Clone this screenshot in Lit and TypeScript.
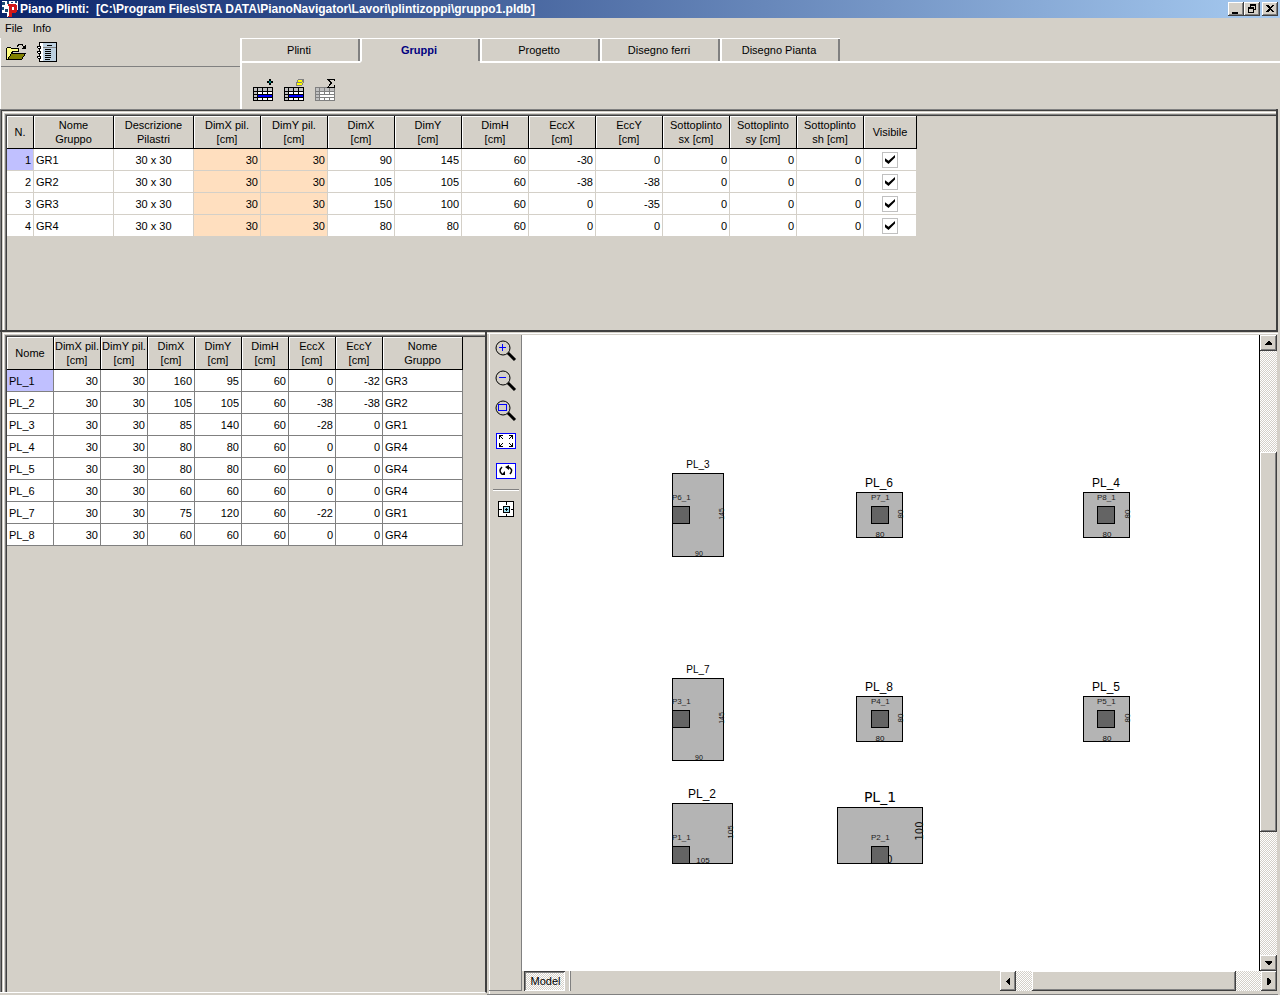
import { LitElement, html, svg, css } from "lit";
import { customElement, state } from "lit/decorators.js";

type Column = { lines: string[]; align: "left" | "center" | "right"; width: number; tint?: boolean };

const groupColumns: Column[] = [
  { lines: ["N."], align: "right", width: 27 },
  { lines: ["Nome", "Gruppo"], align: "left", width: 80 },
  { lines: ["Descrizione", "Pilastri"], align: "center", width: 80 },
  { lines: ["DimX pil.", "[cm]"], align: "right", width: 67, tint: true },
  { lines: ["DimY pil.", "[cm]"], align: "right", width: 67, tint: true },
  { lines: ["DimX", "[cm]"], align: "right", width: 67 },
  { lines: ["DimY", "[cm]"], align: "right", width: 67 },
  { lines: ["DimH", "[cm]"], align: "right", width: 67 },
  { lines: ["EccX", "[cm]"], align: "right", width: 67 },
  { lines: ["EccY", "[cm]"], align: "right", width: 67 },
  { lines: ["Sottoplinto", "sx [cm]"], align: "right", width: 67 },
  { lines: ["Sottoplinto", "sy [cm]"], align: "right", width: 67 },
  { lines: ["Sottoplinto", "sh [cm]"], align: "right", width: 67 },
  { lines: ["Visibile"], align: "center", width: 53 },
];

const groupRows: (string | boolean)[][] = [
  ["1", "GR1", "30 x 30", "30", "30", "90", "145", "60", "-30", "0", "0", "0", "0", true],
  ["2", "GR2", "30 x 30", "30", "30", "105", "105", "60", "-38", "-38", "0", "0", "0", true],
  ["3", "GR3", "30 x 30", "30", "30", "150", "100", "60", "0", "-35", "0", "0", "0", true],
  ["4", "GR4", "30 x 30", "30", "30", "80", "80", "60", "0", "0", "0", "0", "0", true],
];

const footingColumns: Column[] = [
  { lines: ["Nome"], align: "left", width: 47 },
  { lines: ["DimX pil.", "[cm]"], align: "right", width: 47 },
  { lines: ["DimY pil.", "[cm]"], align: "right", width: 47 },
  { lines: ["DimX", "[cm]"], align: "right", width: 47 },
  { lines: ["DimY", "[cm]"], align: "right", width: 47 },
  { lines: ["DimH", "[cm]"], align: "right", width: 47 },
  { lines: ["EccX", "[cm]"], align: "right", width: 47 },
  { lines: ["EccY", "[cm]"], align: "right", width: 47 },
  { lines: ["Nome", "Gruppo"], align: "left", width: 80 },
];

const footingRows: string[][] = [
  ["PL_1", "30", "30", "160", "95", "60", "0", "-32", "GR3"],
  ["PL_2", "30", "30", "105", "105", "60", "-38", "-38", "GR2"],
  ["PL_3", "30", "30", "85", "140", "60", "-28", "0", "GR1"],
  ["PL_4", "30", "30", "80", "80", "60", "0", "0", "GR4"],
  ["PL_5", "30", "30", "80", "80", "60", "0", "0", "GR4"],
  ["PL_6", "30", "30", "60", "60", "60", "0", "0", "GR4"],
  ["PL_7", "30", "30", "75", "120", "60", "-22", "0", "GR1"],
  ["PL_8", "30", "30", "60", "60", "60", "0", "0", "GR4"],
];

type Footing = {
  name: string; pillar: string; x: number; y: number; w: number; h: number;
  px: number; py: number; dimX: string; dimY: string; kind: string;
};

const footings: Footing[] = [
  { name: "PL_3", pillar: "P6_1", x: 150, y: 138, w: 51, h: 83, px: 150, py: 171, dimX: "90", dimY: "145", kind: "narrow" },
  { name: "PL_6", pillar: "P7_1", x: 334, y: 157, w: 46, h: 45, px: 349, py: 171, dimX: "80", dimY: "80", kind: "plain" },
  { name: "PL_4", pillar: "P8_1", x: 561, y: 157, w: 46, h: 45, px: 575, py: 171, dimX: "80", dimY: "80", kind: "plain" },
  { name: "PL_7", pillar: "P3_1", x: 150, y: 343, w: 51, h: 82, px: 150, py: 375, dimX: "90", dimY: "145", kind: "narrow" },
  { name: "PL_8", pillar: "P4_1", x: 334, y: 361, w: 46, h: 45, px: 349, py: 375, dimX: "80", dimY: "80", kind: "plain" },
  { name: "PL_5", pillar: "P5_1", x: 561, y: 361, w: 46, h: 45, px: 575, py: 375, dimX: "80", dimY: "80", kind: "plain" },
  { name: "PL_2", pillar: "P1_1", x: 150, y: 468, w: 60, h: 60, px: 150, py: 511, dimX: "105", dimY: "105", kind: "plain" },
  { name: "PL_1", pillar: "P2_1", x: 315, y: 472, w: 85, h: 56, px: 349, py: 511, dimX: "150", dimY: "100", kind: "wide" },
];

const gridIcon = (stroke: string, band: string) => svg`
  <rect x="0" y="8" width="20" height="14" fill="#fff"/>
  <path d="M0 8h20v4H0zM0 8h5v14H0z" fill="#c0c0c0"/>
  <rect x="5" y="16" width="15" height="2" fill=${band}/>
  <path d="M.5 8.500h19v13h-19zM0 12.500h20M0 15.500h20M0 18.500h20M4.500 8v14M9.500 8v14M14.500 8v14" fill="none" stroke=${stroke}/>
  <rect x="5" y="16" width="14" height="2" fill=${band}/>`;

const lens = svg`
  <circle cx="8" cy="8" r="7" fill="none" stroke="#000"/>
  <path d="M13 13l7 7" stroke="#000" stroke-width="3"/>`;

@customElement("app-root")
export class AppRoot extends LitElement {
  @state() private activeTab = "Gruppi";

  static styles = css`
    :host {
      display: flex;
      flex-direction: column;
      height: 100vh;
      min-height: 600px;
      overflow: hidden;
      box-sizing: border-box;
      background: #d4d0c8;
      color: #000;
      font: 11px/14px "Liberation Sans", Arial, sans-serif;
      cursor: default;
    }
    * { box-sizing: border-box; }
    button { font: inherit; color: inherit; margin: 0; padding: 0; border: 0; background: none; border-radius: 0; }
    svg { display: block; }
    .crisp { shape-rendering: crispEdges; }

    .titlebar {
      flex: none;
      display: flex;
      align-items: center;
      height: 18px;
      padding: 0 2px;
      gap: 2px;
      background: linear-gradient(90deg, #0a246a, #a6caf0);
    }
    .title { flex: 1; margin: 0; font-size: 12px; line-height: 18px; font-weight: bold; color: #fff; white-space: pre; overflow: hidden; }
    .winbuttons { display: flex; }
    .winbutton { display: grid; place-items: center; width: 16px; height: 14px; }
    .raised {
      background: #d4d0c8;
      box-shadow: inset -1px -1px #404040, inset 1px 1px #fff, inset -2px -2px #808080;
    }
    .close { margin-left: 2px; }

    .menu { flex: none; display: flex; height: 20px; }
    .menu button { padding: 0 5px; line-height: 20px; }

    .top { flex: none; display: flex; height: 71px; }
    .filebar { width: 240px; border-left: 1px solid #fff; }
    .filetools { display: flex; align-items: center; gap: 10px; height: 29px; padding-left: 5px; border-bottom: 1px solid #808080; }
    .tabpage { flex: 1; display: flex; flex-direction: column; }
    .tabs { display: flex; height: 25px; }
    .tab {
      width: 120px;
      padding-right: 4px;
      border-top: 1px solid #fff;
      border-left: 2px solid #fff;
      border-bottom: 2px solid #fff;
      box-shadow: inset -2px 0 #808080;
      text-align: center;
    }
    .tab[aria-selected="true"] { border-bottom-color: #d4d0c8; color: #000080; font-weight: bold; }
    .tabrest { flex: 1; border-bottom: 2px solid #fff; }
    .tabtools { flex: 1; display: flex; gap: 10px; padding: 15px 0 0 11px; border-left: 2px solid #fff; align-items: flex-start; }

    .frame {
      padding: 7px;
      box-shadow: inset 1px 1px #808080, inset 2px 2px #404040, inset 3px 3px #d4d0c8,
        inset 4px 4px #fff, inset 5px 5px #d4d0c8, inset 6px 6px #808080, inset 7px 7px #404040;
      overflow: hidden;
    }
    .groups { flex: none; height: 221px; border-right: 2px solid #404040; margin-right: 2px; }

    .bottom { flex: 1; display: flex; min-height: 0; border-top: 2px solid #404040; margin-right: 2px; }
    .footings {
      width: 487px;
      flex: none;
      margin-bottom: 2px;
      padding: 5px 2px 2px 7px;
      border-right: 2px solid #404040;
      border-bottom: 1px solid #fff;
      box-shadow: inset 1px 0 #808080, inset 2px 0 #404040, inset 3px 1px #d4d0c8,
        inset 4px 2px #fff, inset 5px 3px #d4d0c8, inset 6px 4px #808080, inset 7px 5px #404040;
      overflow: hidden;
    }

    table { border-collapse: separate; border-spacing: 0; table-layout: fixed; width: 0; --line: #d4d0c8; }
    .dark { --line: #808080; }
    th {
      height: 33px;
      padding: 0;
      font-weight: normal;
      white-space: nowrap;
      background: #d4d0c8;
      border-right: 1px solid #000;
      border-bottom: 1px solid #000;
      box-shadow: inset 1px 1px #fff;
      overflow: hidden;
    }
    td {
      height: 22px;
      padding: 0 2px;
      background: #fff;
      border-right: 1px solid var(--line);
      border-bottom: 1px solid var(--line);
      white-space: nowrap;
    }
    .right { text-align: right; }
    .center { text-align: center; }
    .left { text-align: left; }
    .tint { background: #ffdfbf; }
    .current { background: #c0c0ff; }
    .check {
      appearance: none;
      display: grid;
      place-items: center;
      width: 16px;
      height: 16px;
      margin: 0 auto;
      border: 1px solid #c0c0c0;
      background: #fff;
    }
    .check:checked::before {
      content: "";
      width: 10px;
      height: 9px;
      background: #000;
      clip-path: polygon(0 35%, 35% 65%, 100% 0, 100% 28%, 35% 100%, 0 70%);
    }

    .viewer { flex: 1; display: flex; min-width: 0; padding: 3px 1px 3px 2px; border-bottom: 1px solid #808080; box-shadow: inset 0 1px #d4d0c8, inset 0 2px #fff, inset 2px 0 #d4d0c8, inset 3px 0 #fff; }
    .viewtools {
      flex: none;
      display: flex;
      flex-direction: column;
      align-items: center;
      gap: 8px;
      width: 33px;
      padding: 5px 0 0 2px;
      border-right: 1px solid #808080;
      border-bottom: 1px solid #808080;
    }
    .viewtools button { display: grid; place-items: center; width: 22px; height: 22px; }
    .rule { width: 26px; height: 2px; border: 0; margin: -1px 0; border-top: 1px solid #808080; border-bottom: 1px solid #fff; }
    .stage { flex: 1; display: flex; flex-direction: column; min-width: 0; }
    .view { flex: 1; display: flex; min-height: 0; }
    .canvas { flex: 1; min-width: 0; height: 100%; background: #fff; }
    .vscroll { flex: none; display: flex; flex-direction: column; width: 18px; border-left: 1px solid #000; }
    .track { display: flex; flex: 1; background: repeating-conic-gradient(#fff 0 25%, #d4d0c8 0 50%) 0 0 / 2px 2px; }
    .vscroll .track { flex-direction: column; }
    .arrow { flex: none; display: grid; place-items: center; }
    .vscroll .arrow { height: 16px; }
    .before-v { flex: 101; } .thumb-v { flex: 380; } .after-v { flex: 123; }
    .before-h { flex: 16; } .thumb-h { flex: 204; } .after-h { flex: 25; }
    .sheets { flex: none; display: flex; height: 20px; }
    .sheet {
      width: 41px;
      margin: 0 4px 0 2px;
      padding-left: 2px;
      line-height: 20px;
      background: repeating-conic-gradient(#fff 0 25%, #d4d0c8 0 50%) 0 0 / 2px 2px;
      box-shadow: inset 1px 1px #404040, inset -1px -1px #fff, inset 2px 2px #808080;
    }
    .grip { width: 2px; border-left: 1px solid #fff; border-right: 1px solid #808080; }
    .sheetrest { flex: 429; }
    .hscroll { flex: 277; display: flex; }
    .hscroll .arrow { width: 16px; }

    .body { fill: #b4b4b4; stroke: #000; }
    .pillar { fill: #646464; stroke: #000; }
    .label { font-size: 12px; text-anchor: middle; }
    .narrow { font-family: "Liberation Sans Narrow", "Liberation Sans", sans-serif; font-size: 10px; }
    .wide { font-family: "DejaVu Sans", sans-serif; font-size: 14px; }
    .small { font-size: 8px; fill: #222; }
    .dim { font-size: 8px; text-anchor: middle; fill: #111; }
    .dim.narrow { font-size: 7px; }
    .dim.wide { font-size: 10px; }
  `;

  private header(columns: Column[]) {
    return html`
      <colgroup>${columns.map((c) => html`<col style="width:${c.width}px">`)}</colgroup>
      <thead><tr>${columns.map((c) => html`<th scope="col">${c.lines.map((l, i) => (i ? html`<br>${l}` : l))}</th>`)}</tr></thead>`;
  }

  private rows(columns: Column[], rows: (string | boolean)[][]) {
    return html`<tbody>${rows.map((row, r) => html`<tr>${row.map((v, c) => html`
      <td class="${columns[c].align} ${columns[c].tint ? "tint" : ""} ${r === 0 && c === 0 ? "current" : ""}">${
        typeof v === "boolean"
          ? html`<input class="check" type="checkbox" aria-label="Visibile ${row[1]}" ?checked=${v}>`
          : v}</td>`)}</tr>`)}</tbody>`;
  }

  private footing(f: Footing) {
    const cx = f.x + Math.round(f.w / 2);
    const sideX = f.x + f.w + 1;
    const sideY = f.kind === "wide" ? f.y + 24 : f.y + Math.round(f.h / 2) - 1;
    const bottomX = f.kind === "wide" ? cx + 3 : cx + 1;
    return svg`<g>
      <rect class="body crisp" x=${f.x + 0.5} y=${f.y + 0.5} width=${f.w} height=${f.h}/>
      <text class="dim ${f.kind}" x=${bottomX} y=${f.y + f.h}>${f.dimX}</text>
      <text class="dim ${f.kind}" transform="translate(${sideX} ${sideY}) rotate(-90)">${f.dimY}</text>
      <rect class="pillar crisp" x=${f.px + 0.5} y=${f.py + 0.5} width="17" height="17"/>
      <text class="small" x=${f.px} y=${f.py - 6}>${f.pillar}</text>
      <text class="label ${f.kind}" x=${cx} y=${f.y - 5}>${f.name}</text>
    </g>`;
  }

  render() {
    const tabs = ["Plinti", "Gruppi", "Progetto", "Disegno ferri", "Disegno Pianta"];
    return html`
      <header class="titlebar">
        <svg class="crisp" width="16" height="16" viewBox="0 0 16 16" aria-hidden="true">
          <path d="M0 0h16v9h-4v2h-2v5H5v-4H0z" fill="#fff"/>
          <path d="M0 1h3v3H0zM5 0h2v3H5zM9 1h2v1H9zM13 0h2v2h-2zM0 6h2v3H0zM3 8h3v3H3z" fill="#1d4c74"/>
          <path d="M6 3h7l2 2v5l-2 2h-3v4H6v-1h1V5H6zM10 6v3h2V6z" fill="#d01818" fill-rule="evenodd"/>
        </svg>
        <h1 class="title">Piano Plinti:  [C:\\Program Files\\STA DATA\\PianoNavigator\\Lavori\\plintizoppi\\gruppo1.pldb]</h1>
        <div class="winbuttons">
          <button class="winbutton raised" aria-label="Riduci a icona"><svg class="crisp" width="12" height="10"><path d="M2 8h6v2H2z"/></svg></button>
          <button class="winbutton raised" aria-label="Ripristina"><svg class="crisp" width="12" height="10"><path d="M4 0h6v6H8V5h1V2H5v1H4zM2 3h6v6H2zM3 5v3h4V5z" fill-rule="evenodd"/></svg></button>
          <button class="winbutton raised close" aria-label="Chiudi"><svg class="crisp" width="12" height="10"><path d="M2 1h2l2 2 2-2h2L7 4.500 10 8H8L6 6 4 8H2l3-3.500z"/></svg></button>
        </div>
      </header>
      <nav class="menu"><button>File</button><button>Info</button></nav>

      <div class="top">
        <div class="filebar">
          <div class="filetools">
            <button aria-label="Apri"><svg class="crisp" width="21" height="18" viewBox="0 0 21 18">
              <path d="M.5 16.500V5.500l1-1h3l1 1h7v3h-6l-4 8z" fill="#ffff80" stroke="#000"/>
              <path d="M1.500 16.500l4-6h14l-4 6z" fill="#808000" stroke="#000"/>
              <path d="M11 3.500l2-2h3l2 3" fill="none" stroke="#000"/><path d="M20 1v5h-5z"/>
            </svg></button>
            <button aria-label="Relazione"><svg class="crisp" width="20" height="20" viewBox="0 0 20 20">
              <path d="M2.500.5h17v19h-17z" fill="#bcd0e0" stroke="#000"/><path d="M3 1h3v18H3z" fill="#fff"/>
              <path d="M6 5.500h13" stroke="#808080"/><path d="M10 3.500h5M8 7.500h6M8 9.500h6M8 11.500h6M8 13.500h6M8 15.500h6M8 17.500h5" stroke="#000"/>
              <path d="M0 4h4v3H1v-1H0zM0 9h4v3H1v-1H0zM0 14h4v3H1v-1H0z"/><path d="M1 5h2v1H1zM1 10h2v1H1zM1 15h2v1H1z" fill="#fff"/>
            </svg></button>
          </div>
        </div>
        <div class="tabpage">
          <div class="tabs" role="tablist">
            ${tabs.map((t) => html`<button class="tab" role="tab" aria-selected=${t === this.activeTab ? "true" : "false"}
              @click=${() => (this.activeTab = t)}>${t}</button>`)}
            <div class="tabrest"></div>
          </div>
          <div class="tabtools">
            <button aria-label="Aggiungi gruppo"><svg class="crisp" width="21" height="24" viewBox="0 -1 21 24">${gridIcon("#000", "#0000ff")}
              <path d="M16 0h2v2h2v2h-2v2h-2V4h-2V2h2z"/><path d="M16 2h2v2h-2z" fill="#008080"/></svg></button>
            <button aria-label="Cancella gruppo"><svg class="crisp" width="21" height="24" viewBox="0 -1 21 24">${gridIcon("#000", "#0000ff")}
              <path d="M14.500.5h5v3l-2 3h-5v-3z" fill="#ffff00" stroke="#808080"/><path d="M12.500 3.500h5l2-3" fill="none" stroke="#808080"/></svg></button>
            <button aria-label="Somma"><svg class="crisp" width="21" height="24" viewBox="0 -1 21 24">${gridIcon("#808080", "#ffffff")}
              <path d="M12 7h8v2h-8z" fill="#d4d0c8"/><path d="M19.500 2V.500h-6.500l3.500 3.500-3.500 4h6.500V6" fill="none" stroke="#000"/></svg></button>
          </div>
        </div>
      </div>

      <section class="frame groups">
        <table aria-label="Gruppi">${this.header(groupColumns)}${this.rows(groupColumns, groupRows)}</table>
      </section>

      <div class="bottom">
        <section class="footings">
          <table class="dark" aria-label="Plinti">${this.header(footingColumns)}${this.rows(footingColumns, footingRows)}</table>
        </section>
        <section class="viewer">
          <div class="viewtools">
            <button aria-label="Ingrandisci"><svg width="22" height="22">${lens}<path class="crisp" d="M4 7.500h7M7.500 4v7" stroke="#00f"/></svg></button>
            <button aria-label="Riduci"><svg width="22" height="22">${lens}<path class="crisp" d="M4 7.500h7" stroke="#00f"/></svg></button>
            <button aria-label="Zoom finestra"><svg width="22" height="22">${lens}<path class="crisp" d="M3.500 4.500h8v6h-8z" fill="none" stroke="#00f"/></svg></button>
            <button aria-label="Zoom tutto"><svg class="crisp" width="20" height="16">
              <path d="M.5.5h19v15H.5z" fill="#fff" stroke="#00f"/>
              <path d="M3 2h4v1H5v1h1v1h1v1H6V5H5V4H4v2H3zM17 2h-4v1h2v1h-1v1h-1v1h1V5h1V4h1v2h1zM3 14h4v-1H5v-1h1v-1h1v-1H6v1H5v1H4v-2H3zM17 14h-4v-1h2v-1h-1v-1h-1v-1h1v1h1v1h1v-2h1z"/></svg></button>
            <button aria-label="Rigenera"><svg width="20" height="16">
              <path d="M.5.5h19v15H.5z" fill="#fff" stroke="#00f" class="crisp"/>
              <path d="M6 4Q2 8 6 11M12 4Q18 6 14 11" fill="none" stroke="#000" stroke-width="1.500"/><path d="M5 12h4V8zM13 2v5L9 4z"/></svg></button>
            <hr class="rule">
            <button aria-label="Centra"><svg class="crisp" width="16" height="16">
              <path d="M.5.5h15v15H.5z" fill="#fff" stroke="#000"/><path d="M8.500 1v14M1 8.500h14" stroke="#000" stroke-dasharray="3 1"/>
              <path d="M5.500 5.500h6v6h-6z" fill="#a0e0f0" stroke="#000"/><path d="M8 7h1v1h1v1H9v1H8V9H7V8h1z"/></svg></button>
          </div>
          <div class="stage">
            <div class="view">
              <svg class="canvas" role="img" aria-label="Pianta dei plinti">${footings.map((f) => this.footing(f))}</svg>
              <div class="vscroll">
                <button class="arrow raised" aria-label="Su"><svg class="crisp" width="7" height="4"><path d="M3 0h1l3 3v1H0V3z"/></svg></button>
                <div class="track"><div class="before-v"></div><div class="thumb-v raised"></div><div class="after-v"></div></div>
                <button class="arrow raised" aria-label="Giù"><svg class="crisp" width="7" height="4"><path d="M0 0h7v1L4 4H3L0 1z"/></svg></button>
              </div>
            </div>
            <div class="sheets">
              <button class="sheet">Model</button>
              <div class="grip"></div>
              <div class="sheetrest"></div>
              <div class="hscroll">
                <button class="arrow raised" aria-label="Sinistra"><svg class="crisp" width="4" height="7"><path d="M4 0v7H3L0 4V3l3-3z"/></svg></button>
                <div class="track"><div class="before-h"></div><div class="thumb-h raised"></div><div class="after-h"></div></div>
                <button class="arrow raised" aria-label="Destra"><svg class="crisp" width="4" height="7"><path d="M0 0v7h1l3-3V3L1 0z"/></svg></button>
              </div>
            </div>
          </div>
        </section>
      </div>
    `;
  }
}
